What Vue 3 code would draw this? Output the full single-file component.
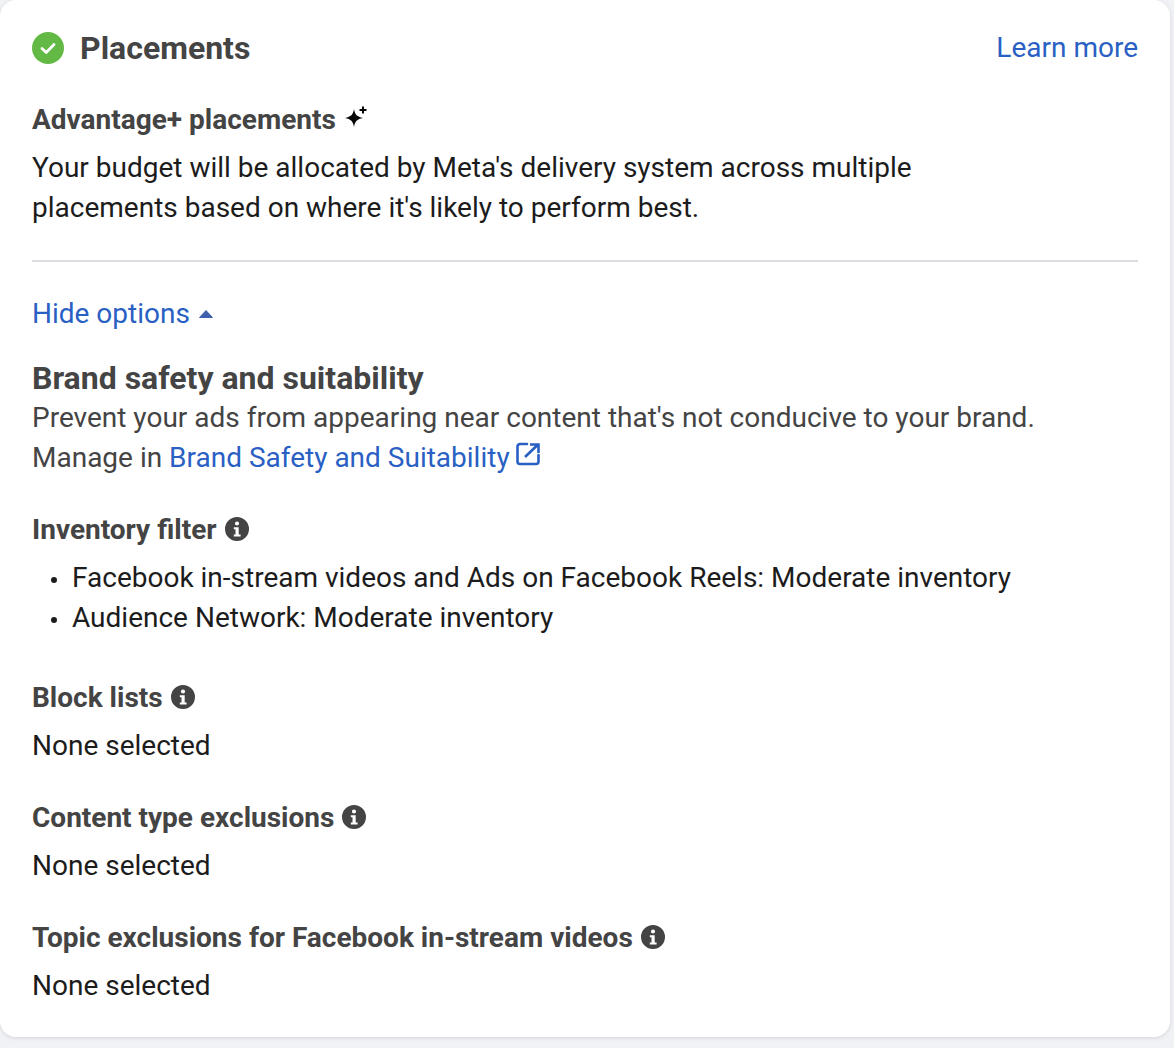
<template>
  <div class="page">
    <div class="card">
      <!-- section: header -->
      <div class="head">
        <div class="title-group">
          <svg class="check" viewBox="0 0 32 32">
            <circle cx="16" cy="16" r="16" fill="#63b946" />
            <path d="M10 16.500l4.200 4L22 12.500" fill="none" stroke="#fff" stroke-width="2.800" stroke-linecap="round" stroke-linejoin="round" />
          </svg>
          <span class="title">Placements</span>
        </div>
        <a class="link">Learn more</a>
      </div>

      <div class="label-row">
        <span class="label">Advantage+ placements</span>
        <svg class="spark" viewBox="0 0 24 24">
          <path d="M10 3c.9 5.600 3 7.800 9 9-6 1.200-8.100 3.400-9 9-.9-5.600-3-7.800-9-9 6-1.200 8.100-3.400 9-9z" fill="#050505" />
          <path d="M18 .5h2v2.500h2.500v2H20v2.500h-2V5h-2.500V3H18z" fill="#050505" />
        </svg>
      </div>
      <p class="text dark">Your budget will be allocated by Meta's delivery system across multiple<br />placements based on where it's likely to perform best.</p>

      <div class="divider"></div>

      <div class="toggle">
        <a class="link">Hide options</a>
        <svg class="caret" viewBox="0 0 16 10"><path d="M8 1.500l6.500 7h-13z" fill="#3f61ad" stroke="#3f61ad" stroke-linejoin="round" /></svg>
      </div>

      <div class="subtitle">Brand safety and suitability</div>
      <p class="text grey">Prevent your ads from appearing near content that's not conducive to your brand.</p>
      <p class="text grey">
        Manage in <a class="link">Brand Safety and Suitability</a>
        <svg class="external" viewBox="0 0 24 24">
          <path d="M11 2H4a2.500 2.500 0 0 0-2.500 2.500v15A2.500 2.500 0 0 0 4 22h16a2.500 2.500 0 0 0 2.500-2.500V13" fill="none" stroke="#2a5fc4" stroke-width="2.600" stroke-linecap="round" />
          <path d="M9 15L21 3.500M14 2.500h8.500V11" fill="none" stroke="#2a5fc4" stroke-width="2.600" />
        </svg>
      </p>

      <div class="group first">
        <div class="label-row">
          <span class="label">Inventory filter</span>
          <svg class="info" viewBox="0 0 24 24"><use href="#info-icon" /></svg>
        </div>
        <ul class="list">
          <li v-for="item in inventory" :key="item">{{ item }}</li>
        </ul>
      </div>

      <div v-for="(sec, idx) in sections" :key="sec" class="group" :class="{ wide: idx === 0 }">
        <div class="label-row">
          <span class="label">{{ sec }}</span>
          <svg class="info" viewBox="0 0 24 24"><use href="#info-icon" /></svg>
        </div>
        <p class="text dark">None selected</p>
      </div>
    </div>

    <svg class="defs" width="0" height="0">
      <symbol id="info-icon" viewBox="0 0 24 24">
        <path fill-rule="evenodd" d="M12 0a12 12 0 1 1 0 24a12 12 0 0 1 0-24zM12 4.400a2.100 2.100 0 1 0 0 4.200a2.100 2.100 0 0 0 0-4.200zM8.800 10.200v2.100h1.700v5.200H8.800v2.100h6.800v-2.100h-1.900v-7.300z" fill="#444" />
      </symbol>
    </svg>
  </div>
</template>

<script setup>
const inventory = [
  'Facebook in-stream videos and Ads on Facebook Reels: Moderate inventory',
  'Audience Network: Moderate inventory'
]

const sections = [
  'Block lists',
  'Content type exclusions',
  'Topic exclusions for Facebook in-stream videos'
]
</script>

<style>
html,
body {
  margin: 0;
  background: #f0f2f5;
}
</style>

<style scoped>
.page {
  width: 1174px;
  height: 1048px;
  overflow: hidden;
  font-family: Roboto, "Liberation Sans", sans-serif;
}

.card {
  width: 1170px;
  height: 1037px;
  box-sizing: border-box;
  padding: 28px 32px 0;
  background: #fff;
  border-radius: 16px;
  box-shadow: 0 1px 4px rgba(0, 0, 0, 0.12);
}

.head {
  display: flex;
  align-items: center;
  justify-content: space-between;
  height: 40px;
  margin-bottom: 31px;
}

.title-group {
  display: flex;
  align-items: center;
  gap: 16px;
}

.check {
  width: 32px;
  height: 32px;
}

.title {
  font-size: 32px;
  font-weight: 700;
  color: #444;
}

.link {
  color: #2a5fc4;
  font-size: 28px;
  line-height: 40px;
}

.label-row {
  display: flex;
  align-items: center;
  height: 40px;
  margin-bottom: 9px;
}

.label {
  font-size: 28px;
  font-weight: 700;
  color: #444;
}

.spark {
  width: 24px;
  height: 24px;
  margin: -2px 0 0 8px;
}

.info {
  width: 24px;
  height: 24px;
  margin-left: 8px;
}

.text {
  margin: 0;
  font-size: 28px;
  line-height: 40px;
}

.dark {
  color: #1c1c1c;
}

.grey {
  color: #444;
}

.divider {
  height: 2px;
  margin: 32px 0;
  background: #dadde1;
}

.toggle {
  display: flex;
  align-items: center;
  gap: 8px;
  height: 40px;
  margin-bottom: 24px;
}

.caret {
  width: 16px;
  height: 10px;
}

.subtitle {
  font-size: 32px;
  font-weight: 700;
  line-height: 40px;
  color: #444;
}

.external {
  width: 24px;
  height: 24px;
  vertical-align: 1px;
  margin-left: 6px;
}

.group {
  margin-top: 31px;
}

.group.wide {
  margin-top: 39px;
}

.list {
  margin: 0;
  padding-left: 40px;
  list-style: none;
  font-size: 28px;
  line-height: 40px;
  color: #1c1c1c;
}

.list li {
  position: relative;
}

.list li::before {
  content: '';
  position: absolute;
  left: -21px;
  top: 19px;
  width: 6px;
  height: 6px;
  border-radius: 50%;
  background: #1c1c1c;
}

.defs {
  position: absolute;
}
</style>
